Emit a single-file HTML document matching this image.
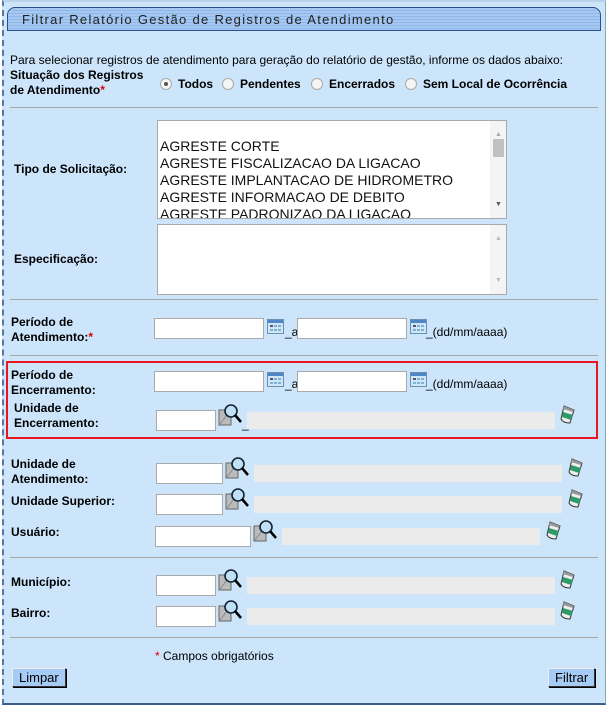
<!DOCTYPE html>
<html><head><meta charset="utf-8"><style>
*{box-sizing:border-box}
body{margin:0;width:612px;height:713px;background:#fff;font-family:"Liberation Sans",Arial,sans-serif;font-size:12px;color:#000;position:relative;overflow:hidden}
.a{position:absolute}
#bg{left:2px;top:0;width:604px;height:705px;background:#cce5fb;border-left:2px dashed #5578a8;border-bottom:2px solid #3b5d8c;border-right:1px solid #8aa;border-top:2px solid #b8d2ec}
.hdr{left:7px;top:7px;width:594px;height:24px;border:1px solid #2a4f8a;border-radius:8px 8px 0 0;background:repeating-linear-gradient(#a7c9f1 0 2px,#8fb8ea 2px 3px);}
.hdr span{position:absolute;left:14px;top:4px;font-size:13px;letter-spacing:1.3px;color:#222}
.sep{left:10px;width:588px;height:1px;background:#a6a6a6}
.lb{font-weight:bold;line-height:15px}
.inp{background:#fff;border:1px solid #a9a9a9;height:21px}
.gray{background:#ebebeb;height:17px}
.red{color:#d00}
.btn{background:#a6cbf4;border:1px solid #333;border-top-color:#eee;border-left-color:#eee;box-shadow:1px 1px 0 #000;font-size:13px;padding:1px 6px;height:19px;line-height:15px}
.rad{width:12px;height:12px;border-radius:50%;border:1px solid #aaa;background:#f5f5f5}
.sel{background:#fff;border:1px solid #a9a9a9;font-size:14px;line-height:17px;padding-left:2px;color:#111}
.sb{right:0;top:0;width:16px;height:100%;background:#f4f4f4}
</style></head><body>
<div id="bg" class="a"></div>
<div class="a hdr"><span>Filtrar Relatório Gestão de Registros de Atendimento</span></div>
<div class="a" style="left:10px;top:53px">Para selecionar registros de atendimento para geração do relatório de gestão, informe os dados abaixo:</div>
<div class="a lb" style="left:10px;top:68px">Situação dos Registros<br><span style="font-weight:bold">de Atendimento</span><span class="red">*</span></div>
<div class="a rad" style="left:160px;top:78px"><div class="a" style="left:3px;top:3px;width:4px;height:4px;border-radius:50%;background:#555"></div></div>
<div class="a lb" style="left:178px;top:77px">Todos</div>
<div class="a rad" style="left:222px;top:78px"></div>
<div class="a lb" style="left:240px;top:77px">Pendentes</div>
<div class="a rad" style="left:311px;top:78px"></div>
<div class="a lb" style="left:329px;top:77px">Encerrados</div>
<div class="a rad" style="left:405px;top:78px"></div>
<div class="a lb" style="left:423px;top:77px">Sem Local de Ocorrência</div>
<div class="a sep" style="top:107px"></div>

<div class="a lb" style="left:14px;top:162px">Tipo de Solicitação:</div>
<div class="a sel" style="left:157px;top:120px;width:350px;height:99px;padding-top:17px;overflow:hidden">AGRESTE CORTE<br>AGRESTE FISCALIZACAO DA LIGACAO<br>AGRESTE IMPLANTACAO DE HIDROMETRO<br>AGRESTE INFORMACAO DE DEBITO<br>AGRESTE PADRONIZAO DA LIGACAO
<div class="a sb"><div class="a" style="left:3px;top:18px;width:11px;height:18px;background:#c1c1c1"></div><div class="a" style="left:5px;top:5px;font-size:7px;color:#aaa">▲</div><div class="a" style="left:5px;bottom:5px;font-size:7px;color:#555">▼</div></div></div>
<div class="a lb" style="left:14px;top:252px">Especificação:</div>
<div class="a sel" style="left:157px;top:224px;width:350px;height:71px"><div class="a sb"><div class="a" style="left:5px;top:5px;font-size:7px;color:#bbb">▲</div><div class="a" style="left:5px;bottom:5px;font-size:7px;color:#bbb">▼</div></div></div>
<div class="a sep" style="top:299px"></div>

<svg width="0" height="0" style="position:absolute"><defs>
<g id="cal"><rect x="0.5" y="0.5" width="16" height="14" fill="#cfe6f7" stroke="#6a8fb3"/><rect x="1" y="1" width="15" height="3" fill="#4f86c6"/><g fill="#7fb0d8"><rect x="3" y="6" width="3" height="2"/><rect x="7" y="6" width="3" height="2"/><rect x="11" y="6" width="3" height="2"/><rect x="3" y="10" width="3" height="2"/><rect x="7" y="10" width="3" height="2"/><rect x="11" y="10" width="3" height="2"/></g><rect x="3" y="6" width="3" height="2" fill="#556"/></g>
<g id="mag"><rect x="1" y="6" width="12" height="15" fill="#bbb" stroke="#666"/><path d="M2 20 L12 7" stroke="#888"/><circle cx="13" cy="7" r="6" fill="#bfe0f5" stroke="#123" stroke-width="1.6"/><path d="M17 11 L23 18" stroke="#000" stroke-width="2.5"/></g>
<g id="era"><path d="M5 2 L15 6 L11 19 Q4 19 2 15 Z" fill="#eee" stroke="#333"/><path d="M4 8 L14 11 L12 16 L3 13 Z" fill="#2d9a67"/><path d="M5 2 L15 6 L14 8 L4 5Z" fill="#999"/></g>
</defs></svg>

<div class="a lb" style="left:11px;top:315px">Período de<br>Atendimento:<span class="red">*</span></div>
<div class="a inp" style="left:154px;top:318px;width:110px"></div>
<svg class="a" style="left:267px;top:319px" width="18" height="16"><use href="#cal"/></svg>
<div class="a" style="left:285px;top:325px">_a</div>
<div class="a inp" style="left:297px;top:318px;width:110px"></div>
<svg class="a" style="left:410px;top:319px" width="18" height="16"><use href="#cal"/></svg>
<div class="a" style="left:426px;top:325px">_(dd/mm/aaaa)</div>
<div class="a sep" style="top:355px"></div>

<div class="a" style="left:6px;top:361px;width:592px;height:78px;border:2px solid #e8161e"></div>
<div class="a lb" style="left:11px;top:368px">Período de<br>Encerramento:</div>
<div class="a inp" style="left:154px;top:371px;width:110px"></div>
<svg class="a" style="left:267px;top:372px" width="18" height="16"><use href="#cal"/></svg>
<div class="a" style="left:285px;top:377px">_a</div>
<div class="a inp" style="left:297px;top:371px;width:110px"></div>
<svg class="a" style="left:410px;top:372px" width="18" height="16"><use href="#cal"/></svg>
<div class="a" style="left:426px;top:377px">_(dd/mm/aaaa)</div>
<div class="a lb" style="left:14px;top:401px">Unidade de<br>Encerramento:</div>
<div class="a inp" style="left:156px;top:410px;width:60px"></div>
<svg class="a" style="left:218px;top:404px" width="25" height="22"><use href="#mag"/></svg>
<div class="a" style="left:242px;top:417px">_</div>
<div class="a gray" style="left:247px;top:412px;width:308px"></div>
<svg class="a" style="left:559px;top:404px" width="18" height="21"><use href="#era"/></svg>

<div class="a lb" style="left:11px;top:457px">Unidade de<br>Atendimento:</div>
<div class="a inp" style="left:156px;top:463px;width:67px"></div>
<svg class="a" style="left:225px;top:457px" width="25" height="22"><use href="#mag"/></svg>
<div class="a gray" style="left:254px;top:465px;width:308px"></div>
<svg class="a" style="left:567px;top:457px" width="18" height="21"><use href="#era"/></svg>

<div class="a lb" style="left:11px;top:494px">Unidade Superior:</div>
<div class="a inp" style="left:156px;top:494px;width:67px"></div>
<svg class="a" style="left:225px;top:488px" width="25" height="22"><use href="#mag"/></svg>
<div class="a gray" style="left:254px;top:496px;width:308px"></div>
<svg class="a" style="left:567px;top:488px" width="18" height="21"><use href="#era"/></svg>

<div class="a lb" style="left:11px;top:525px">Usuário:</div>
<div class="a inp" style="left:155px;top:526px;width:96px"></div>
<svg class="a" style="left:253px;top:520px" width="25" height="22"><use href="#mag"/></svg>
<div class="a gray" style="left:282px;top:528px;width:258px"></div>
<svg class="a" style="left:545px;top:520px" width="18" height="21"><use href="#era"/></svg>
<div class="a sep" style="top:557px"></div>

<div class="a lb" style="left:11px;top:575px">Município:</div>
<div class="a inp" style="left:156px;top:575px;width:60px"></div>
<svg class="a" style="left:218px;top:569px" width="25" height="22"><use href="#mag"/></svg>
<div class="a gray" style="left:247px;top:577px;width:308px"></div>
<svg class="a" style="left:559px;top:569px" width="18" height="21"><use href="#era"/></svg>

<div class="a lb" style="left:11px;top:606px">Bairro:</div>
<div class="a inp" style="left:156px;top:606px;width:60px"></div>
<svg class="a" style="left:218px;top:600px" width="25" height="22"><use href="#mag"/></svg>
<div class="a gray" style="left:247px;top:608px;width:308px"></div>
<svg class="a" style="left:559px;top:600px" width="18" height="21"><use href="#era"/></svg>
<div class="a sep" style="top:637px"></div>

<div class="a" style="left:155px;top:649px"><span class="red">*</span> Campos obrigatórios</div>
<div class="a btn" style="left:12px;top:668px">Limpar</div>
<div class="a btn" style="left:548px;top:668px">Filtrar</div>
</body></html>
